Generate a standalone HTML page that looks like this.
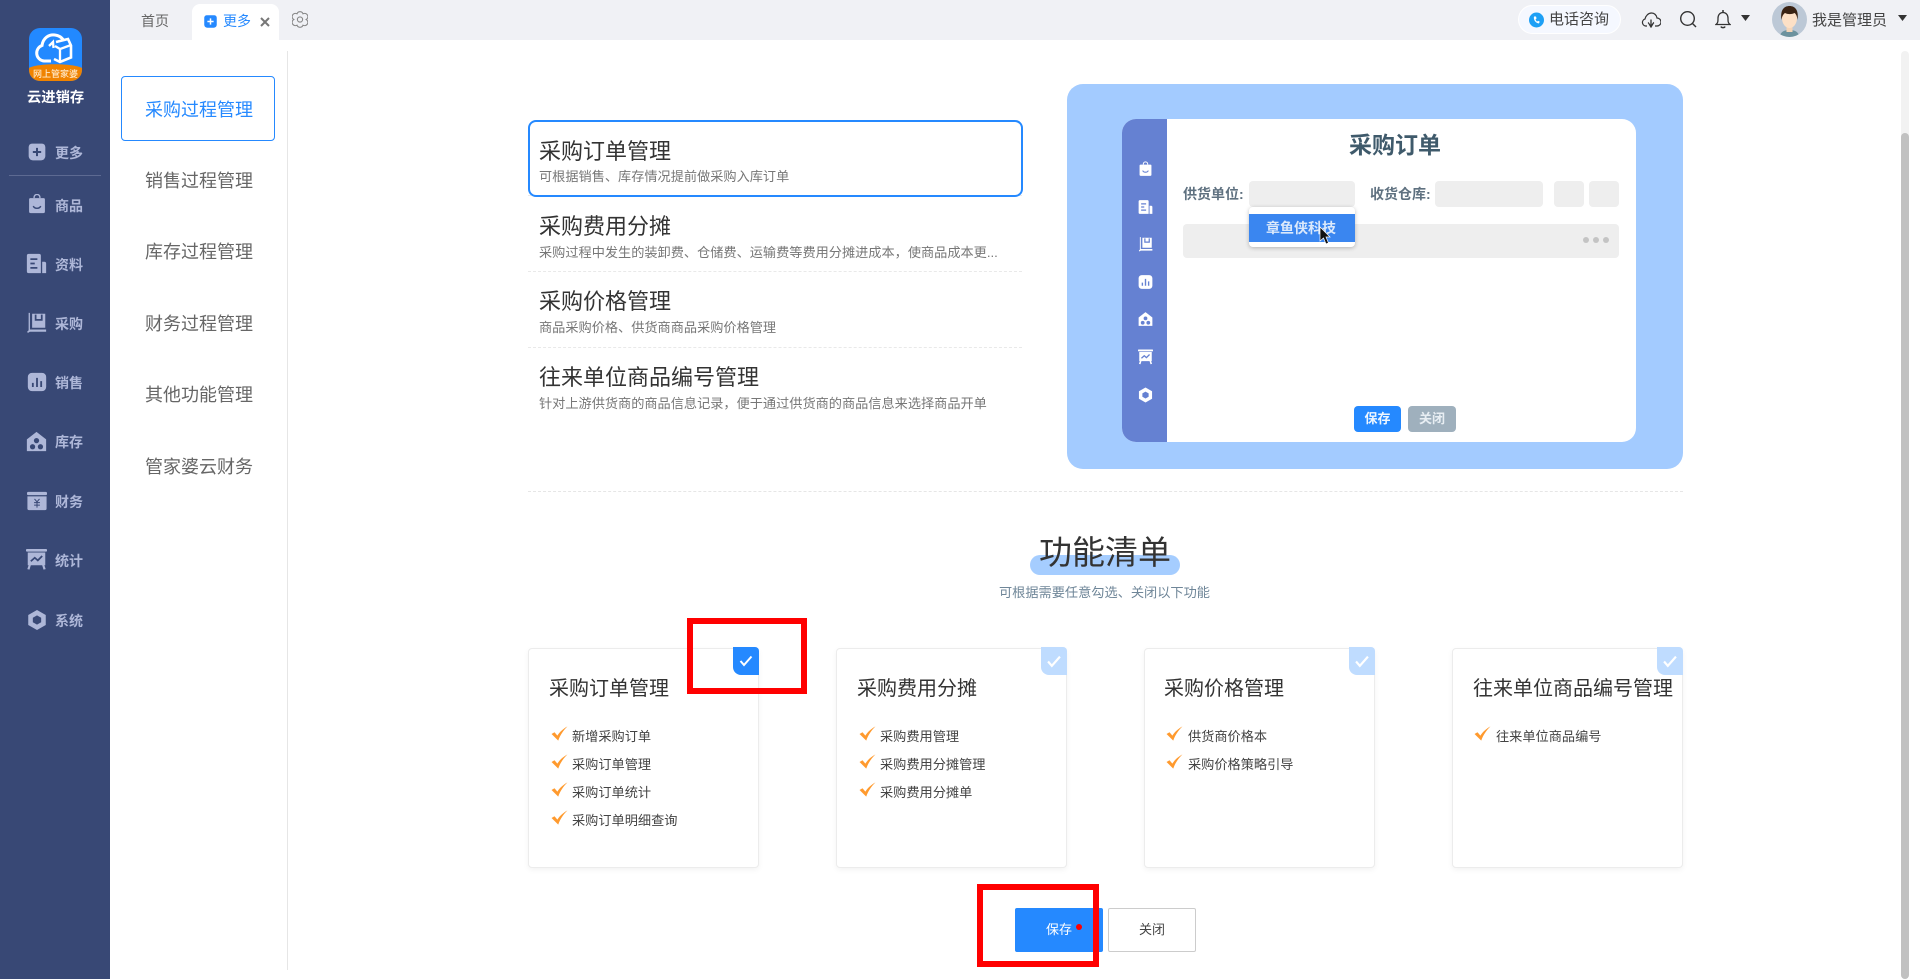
<!DOCTYPE html>
<html lang="zh-CN"><head><meta charset="utf-8"><title>更多</title>
<style>
*{box-sizing:border-box;margin:0;padding:0}
html,body{width:1920px;height:979px;overflow:hidden;background:#fff;font-family:"Liberation Sans","Noto Sans CJK SC",sans-serif}
#r{position:relative;width:1920px;height:979px;overflow:hidden}
.a,.t{position:absolute}
.t{white-space:nowrap}
.side{left:0;top:0;width:110px;height:979px;background:#384875;--h:#384875}
.ni{position:absolute;left:55px;font-size:14px;font-weight:700;line-height:20px;color:#aeb7d8;white-space:nowrap}
.ic{position:absolute;color:#aeb7d8}
.m{left:145px;font-size:18px;line-height:26px;color:#666}
.h{left:539px;font-size:22px;line-height:30px;color:#333}
.d{left:539px;font-size:13.180px;line-height:18px;color:#777}
.dash{left:528px;width:494px;height:0;border-top:1px dashed #e9e9e9}
.card{top:648px;width:231px;height:220px;background:#fff;border:1px solid #ececec;border-radius:4px;box-shadow:0 2px 6px rgba(0,0,0,.05)}
.ct{font-size:20px;line-height:28px;color:#333}
.it{font-size:13.200px;line-height:18px;color:#444}
.bd{top:647px;width:26px;height:28px;border-radius:0 4px 0 8px;background:#bfdcff}
.bx{background:#eee;border-radius:4px}
.lb{font-size:14px;font-weight:700;color:#5f7180;line-height:18px}
</style></head><body><div id="r">
<svg width="0" height="0" style="position:absolute"><defs>
<symbol id="plus" viewBox="0 0 24 24"><path d="M6 2h12a4 4 0 0 1 4 4v11a5 5 0 0 1-5 5H7a5 5 0 0 1-5-5V6a4 4 0 0 1 4-4z" fill="currentColor"/><path d="M12 7v10M7 12h10" stroke="var(--h)" stroke-width="2.400"/></symbol>
<symbol id="bag" viewBox="0 0 24 24"><path d="M8.500 5V4a3.500 3.500 0 0 1 7 0v1" fill="none" stroke="currentColor" stroke-width="1.600"/><path d="M4 5h16a1.500 1.500 0 0 1 1.500 1.500V21a2 2 0 0 1-2 2h-15a2 2 0 0 1-2-2V6.500A1.500 1.500 0 0 1 4 5z" fill="currentColor"/><path d="M7.500 14.500c1.500 3.500 7.500 3.500 9 0" fill="none" stroke="var(--h)" stroke-width="1.700"/></symbol>
<symbol id="doc" viewBox="0 0 24 24"><path d="M3 1h12a2 2 0 0 1 2 2v20H3a2 2 0 0 1-2-2V3a2 2 0 0 1 2-2z" fill="currentColor"/><path d="M18.500 10H21a2 2 0 0 1 2 2v11h-4.500z" fill="currentColor"/><path d="M5 7h8M5 12h5M5 17h8" stroke="var(--h)" stroke-width="2"/></symbol>
<symbol id="cart" viewBox="0 0 24 24"><path d="M3 1h1.500v19H23v2.500H4.500L2 24l-.6-1.700L3 21z" fill="currentColor"/><path d="M7 2h15v16H7z" fill="currentColor"/><path d="M11 3v6h7V3" fill="none" stroke="var(--h)" stroke-width="2"/></symbol>
<symbol id="chart" viewBox="0 0 24 24"><rect x="1" y="1" width="22" height="22" rx="5" fill="currentColor"/><path d="M7 13v5M12 7v11M17 11v7" stroke="var(--h)" stroke-width="2.200"/></symbol>
<symbol id="house" viewBox="0 0 24 24"><path d="M12 1l11 8.500V23H1V9.500z" fill="currentColor"/><circle cx="12" cy="11" r="3" fill="var(--h)"/><circle cx="7.500" cy="18" r="3" fill="var(--h)"/><circle cx="16.500" cy="18" r="3" fill="var(--h)"/></symbol>
<symbol id="fin" viewBox="0 0 24 24"><rect x="0" y="1" width="24" height="4" rx="1.500" fill="currentColor"/><path d="M.5 6.500h23V21a2 2 0 0 1-2 2h-19a2 2 0 0 1-2-2z" fill="currentColor"/><path d="M9 9.500l3 3.500 3-3.500M8.500 14h7M8.500 17h7M12 13v7" fill="none" stroke="var(--h)" stroke-width="1.200"/></symbol>
<symbol id="stat" viewBox="0 0 24 24"><rect x="0" y="0" width="24" height="3" rx="1" fill="currentColor"/><path d="M2 4h20v14.500h-1l1.500 4.500-2.500.5-1.500-5H5.500l-1.500 5-2.500-.5L3 18.500H2z" fill="currentColor"/><path d="M5.500 14l4.500-4 3.500 3 5-5" fill="none" stroke="var(--h)" stroke-width="2"/></symbol>
<symbol id="sys" viewBox="0 0 24 24"><path d="M12 0l10.500 6v12L12 24 1.500 18V6z" fill="currentColor"/><path d="M12 6.500l5 2.800v5.400l-5 2.800-5-2.800V9.300z" fill="var(--h)"/></symbol>
<symbol id="ck" viewBox="0 0 16 14"><path d="M.5 7.500l2.800-1.700L6 9C8 5.800 11 2.800 15.500.3 11.800 4 8.800 8 6.800 13.700z" fill="currentColor"/></symbol>
</defs></svg>

<!-- top bar -->
<div class="a" style="left:110px;top:0;width:1810px;height:40px;background:#f0f1f5"></div>
<div class="t" style="left:141px;top:11px;font-size:14px;line-height:20px;color:#666">首页</div>
<div class="a" style="left:192px;top:4px;width:87px;height:36px;background:#fff;border-radius:8px 8px 0 0"></div>
<svg class="a" style="left:203px;top:14px;--h:#fff;color:#2589ff" width="15" height="15"><use href="#plus"/></svg>
<div class="t" style="left:223px;top:11px;font-size:14px;line-height:20px;color:#2589ff">更多</div>
<svg class="a" style="left:260px;top:17px" width="10" height="10" viewBox="0 0 10 10"><path d="M1 1l8 8M9 1L1 9" stroke="#777" stroke-width="2"/></svg>
<svg class="a" style="left:292px;top:11px" width="16" height="17" viewBox="0 0 16 17" fill="none" stroke="#888" stroke-width="1.100"><path d="M5 2.800A3.200 3.200 0 0 1 11 2.800 3.200 3.200 0 0 1 14.200 8.500 3.200 3.200 0 0 1 11 14.200 3.200 3.200 0 0 1 5 14.200 3.200 3.200 0 0 1 1.800 8.500 3.200 3.200 0 0 1 5 2.800z"/><circle cx="8" cy="8.500" r="2.600"/></svg>

<div class="a" style="left:1518px;top:5px;width:103px;height:29px;background:#f5f8ff;border:1px solid #fff;border-radius:15px"></div>
<svg class="a" style="left:1529px;top:12px" width="15" height="16" viewBox="0 0 15 16"><circle cx="7.500" cy="8" r="7.500" fill="#1ea0f5"/><path d="M5 4.500c-.8 3 1.500 6.500 4.800 7l1-1.700-1.800-1-.9.800c-.8-.6-1.300-1.500-1.500-2.500l1-.6-.6-2z" fill="#fff"/></svg>
<div class="t" style="left:1549px;top:9px;font-size:15px;line-height:21px;color:#444">电话咨询</div>
<svg class="a" style="left:1641px;top:12px" width="20" height="16" viewBox="0 0 20 16" fill="none" stroke="#333" stroke-width="1.200"><path d="M6 14H4.500A3.600 3.600 0 0 1 4 7C4.800 3.500 7.500 1 10.500 1c2.800 0 5 2 5.500 5a4 4 0 0 1 0 8h-2"/><path d="M10 15V7.500M7 10.500c.8.500 2 3 3 4.500 1-1.500 2-4 3-4.500" stroke-width="1.300"/></svg>
<svg class="a" style="left:1679px;top:10px" width="18" height="18" viewBox="0 0 18 18" fill="none" stroke="#333" stroke-width="1.400"><circle cx="8.500" cy="8.500" r="6.800"/><path d="M13.500 13.500L17 17"/></svg>
<svg class="a" style="left:1715px;top:9px" width="16" height="20" viewBox="0 0 16 20" fill="none" stroke="#333" stroke-width="1.300"><path d="M1 15.500h14c-2-1.500-2-3-2-6.500 0-3-2-5.500-5-5.500S3 6 3 9c0 3.500 0 5-2 6.500z"/><path d="M8 1v2.500M6 17.500c.5 1.500 3.500 1.500 4 0" stroke-width="1.500"/></svg>
<svg class="a" style="left:1741px;top:15px" width="9" height="6"><path d="M0 0h9L4.500 6z" fill="#333"/></svg>
<svg class="a" style="left:1772px;top:2px" width="35" height="35" viewBox="0 0 35 35"><defs><clipPath id="av"><circle cx="17.500" cy="17.500" r="17.500"/></clipPath></defs><g clip-path="url(#av)"><rect width="35" height="35" fill="#bcc8d6"/><path d="M8 35c0-5 4-7 9.500-7S27 30 27 35z" fill="#6d929e"/><rect x="14.500" y="23" width="6" height="7" fill="#f5d5b8"/><ellipse cx="17.500" cy="16" rx="7.500" ry="10" fill="#fde0c6"/><path d="M9.500 18C8 8 12 4 17.500 4S27 8 25.500 18c-.5-4-1.500-6-3-7-3 1.500-6.500 1.500-9.500 0-1.500 1-3 3-3.500 7z" fill="#3a2314"/></g></svg>
<div class="t" style="left:1812px;top:10px;font-size:15px;line-height:21px;color:#444">我是管理员</div>
<svg class="a" style="left:1898px;top:15px" width="9" height="6"><path d="M0 0h9L4.500 6z" fill="#333"/></svg>

<!-- sidebar -->
<div class="a side">
<svg class="a" style="left:29px;top:28px" width="53" height="53" viewBox="0 0 53 53"><defs><clipPath id="lg"><rect width="53" height="53" rx="11"/></clipPath></defs><g clip-path="url(#lg)"><rect width="53" height="53" fill="#2289ff"/><path d="M0 40c8-5 44-5 53 0v13H0z" fill="#f08300"/></g><path d="M22 33h-7a8 8 0 0 1-2-15.500C14 10 20 6 26 7c4 .5 7 3 8.500 5" fill="none" stroke="#fff" stroke-width="3"/><path d="M27 14l12-3 3 6.500v12L31 34l-6-3" fill="none" stroke="#fff" stroke-width="2.600"/><path d="M31 34V21l11-4M31 21l-5-3M20 18l4-4 .5 6" fill="none" stroke="#fff" stroke-width="2.300"/></svg>
<div class="t" style="left:33px;top:67px;font-size:9px;line-height:14px;font-weight:500;color:#ffe9c8">网上管家婆</div>
<div class="t" style="left:27px;top:88px;font-size:14.300px;line-height:20px;font-weight:700;color:#fff">云进销存</div>
<svg class="ic" style="left:27px;top:142px" width="20" height="20"><use href="#plus"/></svg><div class="ni" style="top:143px">更多</div>
<div class="a" style="left:9px;top:175px;width:92px;height:1px;background:#5d6a92"></div>
<svg class="ic" style="left:27px;top:194px" width="20" height="20"><use href="#bag"/></svg><div class="ni" style="top:196px">商品</div>
<svg class="ic" style="left:25px;top:253px" width="23" height="21"><use href="#doc"/></svg><div class="ni" style="top:255px">资料</div>
<svg class="ic" style="left:26px;top:312px" width="21" height="21"><use href="#cart"/></svg><div class="ni" style="top:314px">采购</div>
<svg class="ic" style="left:27px;top:372px" width="20" height="20"><use href="#chart"/></svg><div class="ni" style="top:373px">销售</div>
<svg class="ic" style="left:26px;top:431px" width="21" height="21"><use href="#house"/></svg><div class="ni" style="top:432px">库存</div>
<svg class="ic" style="left:26px;top:491px" width="22" height="20"><use href="#fin"/></svg><div class="ni" style="top:492px">财务</div>
<svg class="ic" style="left:26px;top:549px" width="21" height="21"><use href="#stat"/></svg><div class="ni" style="top:551px">统计</div>
<svg class="ic" style="left:27px;top:609px" width="20" height="22"><use href="#sys"/></svg><div class="ni" style="top:611px">系统</div>
</div>

<!-- left menu -->
<div class="a" style="left:121px;top:76px;width:154px;height:65px;border:1px solid #2589ff;border-radius:4px"></div>
<div class="t m" style="top:97px;color:#2589ff">采购过程管理</div>
<div class="t m" style="top:168px">销售过程管理</div>
<div class="t m" style="top:239px">库存过程管理</div>
<div class="t m" style="top:311px">财务过程管理</div>
<div class="t m" style="top:382px">其他功能管理</div>
<div class="t m" style="top:454px">管家婆云财务</div>
<div class="a" style="left:287px;top:51px;width:1px;height:919px;background:#e6e6e6"></div>

<!-- list -->
<div class="a dash" style="top:195px"></div>
<div class="a dash" style="top:271px"></div>
<div class="a dash" style="top:347px"></div>
<div class="a" style="left:528px;top:120px;width:495px;height:77px;border:2px solid #2589ff;border-radius:8px"></div>
<div class="t h" style="top:137px">采购订单管理</div>
<div class="t d" style="top:168px">可根据销售、库存情况提前做采购入库订单</div>
<div class="t h" style="top:212px">采购费用分摊</div>
<div class="t d" style="top:244px">采购过程中发生的装卸费、仓储费、运输费等费用分摊进成本，使商品成本更...</div>
<div class="t h" style="top:287px">采购价格管理</div>
<div class="t d" style="top:319px">商品采购价格、供货商商品采购价格管理</div>
<div class="t h" style="top:363px">往来单位商品编号管理</div>
<div class="t d" style="top:395px">针对上游供货商的商品信息记录，便于通过供货商的商品信息来选择商品开单</div>

<!-- preview -->
<div class="a" style="left:1067px;top:84px;width:616px;height:385px;background:#a3cbff;border-radius:16px"></div>
<div style="position:absolute;left:0;top:0;filter:blur(.35px)">
<div class="a" style="left:1122px;top:119px;width:514px;height:323px;background:#fff;border-radius:14px;overflow:hidden"><div style="width:45px;height:323px;background:#6581d2"></div></div>
<div style="--h:#6581d2;color:#fff">
<svg class="a" style="left:1138px;top:161px" width="15" height="16"><use href="#bag"/></svg>
<svg class="a" style="left:1138px;top:199px" width="15" height="16"><use href="#doc"/></svg>
<svg class="a" style="left:1138px;top:236px" width="15" height="16"><use href="#cart"/></svg>
<svg class="a" style="left:1138px;top:274px" width="15" height="16"><use href="#chart"/></svg>
<svg class="a" style="left:1138px;top:311px" width="15" height="16"><use href="#house"/></svg>
<svg class="a" style="left:1138px;top:349px" width="15" height="16"><use href="#stat"/></svg>
<svg class="a" style="left:1138px;top:387px" width="15" height="16"><use href="#sys"/></svg>
</div>
<div class="t" style="left:1349px;top:129px;font-size:23px;line-height:32px;font-weight:700;color:#3f5a6b">采购订单</div>
<div class="t lb" style="left:1183px;top:185px">供货单位:</div>
<div class="a bx" style="left:1249px;top:181px;width:106px;height:26px"></div>
<div class="t lb" style="left:1370px;top:185px">收货仓库:</div>
<div class="a bx" style="left:1435px;top:181px;width:108px;height:26px"></div>
<div class="a bx" style="left:1554px;top:181px;width:30px;height:26px"></div>
<div class="a bx" style="left:1589px;top:181px;width:30px;height:26px"></div>
<div class="a bx" style="left:1183px;top:224px;width:436px;height:34px"></div>
<div class="a" style="left:1249px;top:207px;width:106px;height:40px;background:#fff;border-radius:4px;box-shadow:0 1px 4px rgba(0,0,0,.25)"></div>
<div class="a" style="left:1249px;top:214px;width:106px;height:28px;background:#3a86f0"></div>
<div class="t" style="left:1266px;top:219px;font-size:14px;line-height:18px;font-weight:700;color:#dbe9fb">章鱼侠科技</div>
<svg class="a" style="left:1319px;top:226px" width="12" height="21" viewBox="0 0 12 21"><path d="M1 1v14l3.500-3 2.500 6 2.500-1-2.500-6H11z" fill="#111" stroke="#fff" stroke-width=".7"/></svg>
<div class="a" style="left:1583px;top:237px;width:6px;height:6px;border-radius:50%;background:#c4c4c4;box-shadow:10px 0 #c4c4c4,20px 0 #c4c4c4"></div>
<div class="a" style="left:1354px;top:406px;width:47px;height:26px;background:#2589ff;border-radius:4px;color:#eef6ff;font-size:13px;font-weight:700;line-height:26px;text-align:center">保存</div>
<div class="a" style="left:1408px;top:406px;width:48px;height:26px;background:#9fb0bd;border-radius:4px;color:#e8eef3;font-size:13px;font-weight:700;line-height:26px;text-align:center">关闭</div>
</div>

<div class="a" style="left:528px;top:491px;width:1155px;height:0;border-top:1px dashed #e6e6e6"></div>

<!-- title -->
<div class="a" style="left:1030px;top:555px;width:150px;height:20px;background:#a5cdff;border-radius:10px"></div>
<div class="t" style="left:1039px;top:530px;font-size:33px;line-height:46px;color:#333">功能清单</div>
<div class="t" style="left:999px;top:584px;font-size:13.200px;line-height:18px;color:#6f8698">可根据需要任意勾选、关闭以下功能</div>

<!-- cards -->
<div class="a card" style="left:528px"></div>
<div class="a card" style="left:836px"></div>
<div class="a card" style="left:1144px"></div>
<div class="a card" style="left:1452px"></div>

<div class="a bd" style="left:733px;background:#2589ff"></div>
<div class="a bd" style="left:1041px"></div>
<div class="a bd" style="left:1349px"></div>
<div class="a bd" style="left:1657px"></div>
<svg class="a" style="left:739px;top:655px" width="14" height="12" viewBox="0 0 14 12"><path d="M1.500 6l3.500 4 7.500-8.500" fill="none" stroke="#fff" stroke-width="2"/></svg>
<svg class="a" style="left:1046px;top:655px" width="16" height="13" viewBox="0 0 14 12"><path d="M1.500 6l3.500 4 7.500-8.500" fill="none" stroke="#fff" stroke-width="2"/></svg>
<svg class="a" style="left:1354px;top:655px" width="16" height="13" viewBox="0 0 14 12"><path d="M1.500 6l3.500 4 7.500-8.500" fill="none" stroke="#fff" stroke-width="2"/></svg>
<svg class="a" style="left:1662px;top:655px" width="16" height="13" viewBox="0 0 14 12"><path d="M1.500 6l3.500 4 7.500-8.500" fill="none" stroke="#fff" stroke-width="2"/></svg>

<div class="t ct" style="left:549px;top:675px">采购订单管理</div>
<div class="t ct" style="left:857px;top:675px">采购费用分摊</div>
<div class="t ct" style="left:1164px;top:675px">采购价格管理</div>
<div class="t ct" style="left:1473px;top:675px">往来单位商品编号管理</div>

<div style="color:#ff9a2e">
<svg class="a" style="left:551px;top:726px" width="17" height="15"><use href="#ck"/></svg>
<svg class="a" style="left:551px;top:754px" width="17" height="15"><use href="#ck"/></svg>
<svg class="a" style="left:551px;top:782px" width="17" height="15"><use href="#ck"/></svg>
<svg class="a" style="left:551px;top:810px" width="17" height="15"><use href="#ck"/></svg>
<svg class="a" style="left:859px;top:726px" width="17" height="15"><use href="#ck"/></svg>
<svg class="a" style="left:859px;top:754px" width="17" height="15"><use href="#ck"/></svg>
<svg class="a" style="left:859px;top:782px" width="17" height="15"><use href="#ck"/></svg>
<svg class="a" style="left:1166px;top:726px" width="17" height="15"><use href="#ck"/></svg>
<svg class="a" style="left:1166px;top:754px" width="17" height="15"><use href="#ck"/></svg>
<svg class="a" style="left:1474px;top:726px" width="17" height="15"><use href="#ck"/></svg>
</div>
<div class="t it" style="left:572px;top:728px">新增采购订单</div>
<div class="t it" style="left:572px;top:756px">采购订单管理</div>
<div class="t it" style="left:572px;top:784px">采购订单统计</div>
<div class="t it" style="left:572px;top:812px">采购订单明细查询</div>
<div class="t it" style="left:880px;top:728px">采购费用管理</div>
<div class="t it" style="left:880px;top:756px">采购费用分摊管理</div>
<div class="t it" style="left:880px;top:784px">采购费用分摊单</div>
<div class="t it" style="left:1188px;top:728px">供货商价格本</div>
<div class="t it" style="left:1188px;top:756px">采购价格策略引导</div>
<div class="t it" style="left:1496px;top:728px">往来单位商品编号</div>

<!-- buttons -->
<div class="a" style="left:1015px;top:908px;width:88px;height:44px;background:#2589ff;border-radius:2px"></div>
<div class="t" style="left:1046px;top:920px;font-size:13px;line-height:20px;color:#fff">保存</div>
<div class="a" style="left:1076px;top:924px;width:6px;height:6px;border-radius:50%;background:#f00"></div>
<div class="a" style="left:1108px;top:908px;width:88px;height:44px;border:1px solid #ccc;border-radius:2px;font-size:13px;line-height:42px;text-align:center;color:#444">关闭</div>

<!-- red annotation boxes -->
<div class="a" style="left:687px;top:618px;width:120px;height:76px;border:6px solid #f00"></div>
<div class="a" style="left:977px;top:884px;width:122px;height:83px;border:6px solid #f00"></div>

<!-- scrollbar -->
<div class="a" style="left:1901px;top:51px;width:8px;height:928px;background:#f2f2f2;border-radius:4px"></div>
<div class="a" style="left:1901px;top:133px;width:8px;height:846px;background:#c1c1c1;border-radius:4px"></div>
</div></body></html>
